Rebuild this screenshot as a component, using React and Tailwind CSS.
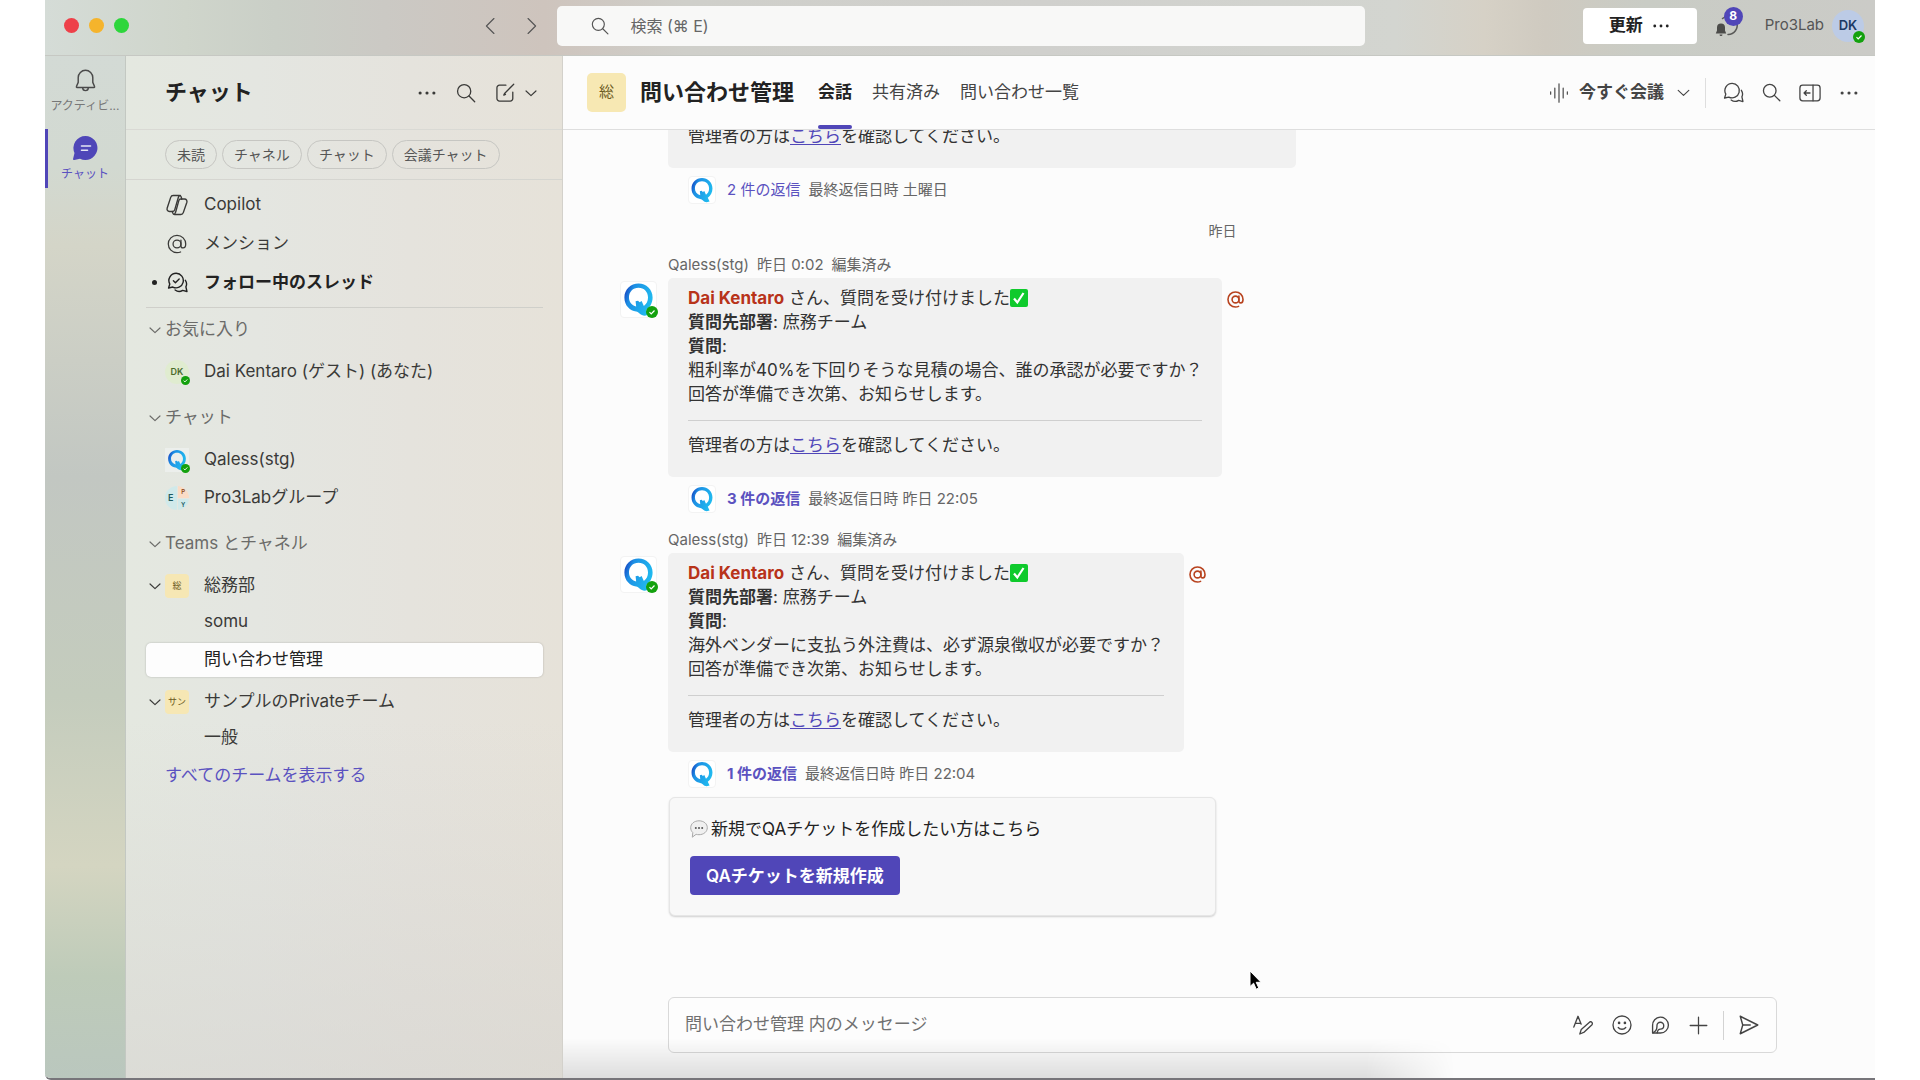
import React from 'react'
import clsx from 'clsx'

const Svg = ({ size = 24, width = 1.4, className, children }) => (
  <svg
    width={size}
    height={size}
    viewBox="0 0 24 24"
    fill="none"
    stroke="currentColor"
    strokeWidth={width}
    strokeLinecap="round"
    strokeLinejoin="round"
    className={clsx('shrink-0', className)}
    aria-hidden="true"
  >
    {children}
  </svg>
)

const SearchIcon = (props) => (
  <Svg {...props}>
    <circle cx="10" cy="10" r="7.2" />
    <path d="M15.300 15.300l6.200 6.200" />
  </Svg>
)

const DotsIcon = (props) => (
  <Svg {...props}>
    <g fill="currentColor" stroke="none">
      <circle cx="4.500" cy="12" r="1.700" />
      <circle cx="12" cy="12" r="1.700" />
      <circle cx="19.500" cy="12" r="1.700" />
    </g>
  </Svg>
)

const ChevronDown = (props) => (
  <Svg {...props}>
    <path d="M3.500 8.500l8.500 8 8.500-8" />
  </Svg>
)

const ComposeIcon = (props) => (
  <Svg {...props}>
    <path d="M13 3.500H6A2.800 2.800 0 0 0 3.200 6.300V18A2.800 2.800 0 0 0 6 20.800H17.700A2.800 2.800 0 0 0 20.500 18V11" />
    <path d="M21.500 2.500L11.500 12.500l-.8 1.800 1.800-.8" />
  </Svg>
)

const BellIcon = (props) => (
  <Svg {...props}>
    <path d="M12 2.200a7 7 0 0 0-7 7v4.600l-1.700 4a.6.6 0 0 0 .6.900h16.200a.6.6 0 0 0 .6-.9l-1.700-4V9.200a7 7 0 0 0-7-7z" />
    <path d="M9.300 19a2.700 2.700 0 0 0 5.400 0" />
  </Svg>
)

const ChatFilledIcon = () => (
  <svg width="26" height="26" viewBox="0 0 26 26" aria-hidden="true">
    <path d="M13.500 1A12 12 0 1 1 8 23.700L2.300 25a1 1 0 0 1-1.200-1.200L2.500 18A12 12 0 0 1 13.500 1z" fill="#4f46b8" />
    <path d="M9.500 11h9M9.500 15.200h6" stroke="#e6e6f4" strokeWidth="1.600" strokeLinecap="round" />
  </svg>
)

const CopilotIcon = (props) => (
  <Svg {...props}>
    <path d="M8.200 2.500h6.200c.9 0 1.500.5 1.800 1.400l.6 2.300M8.200 2.500c-1.200 0-2.100.7-2.500 1.900L2.200 15c-.6 1.900.4 3.500 2.300 3.500h3.200c1 0 1.700-.6 2-1.600l3.700-12.600c.3-1.100.9-1.800 2-1.800" />
    <path d="M15.800 21.500H9.600c-.9 0-1.500-.5-1.800-1.400l-.5-1.600M15.800 21.500c1.200 0 2.100-.7 2.500-1.900L21.800 9.500c.6-1.900-.4-3.500-2.300-3.500h-3.700c-1 0-1.700.6-2 1.600l-3.200 11.600c-.3 1.200-.9 2-1.900 2.200" />
  </Svg>
)

const AtIcon = (props) => (
  <Svg {...props}>
    <circle cx="12" cy="12" r="4.300" />
    <path d="M16.300 7.700v6.100c0 1.600.9 2.500 2.300 2.500 1.700 0 2.900-1.600 2.900-4.300A9.500 9.500 0 1 0 12 21.500c1.400 0 2.700-.2 3.900-.8" />
  </Svg>
)

const ThreadsIcon = ({ check, ...props }) => (
  <Svg {...props}>
    <path d="M10.500 1.500a8.300 8.300 0 1 1-3.900 15.700l-4.800 1.100 1.400-4.500A8.300 8.300 0 0 1 10.500 1.500z" />
    <path d="M21 9.500a7.600 7.600 0 0 1 .6 7.500l1.200 5.300-4.900-1.300a7.800 7.800 0 0 1-8.600-.4" />
    {check && <path d="M7.300 10l2.300 2.300 4.300-4.300" />}
  </Svg>
)

const WaveIcon = (props) => (
  <Svg {...props}>
    <path d="M2 10.500v3M7 6v12M12 1v22M17 6v12M22 10.500v3" />
  </Svg>
)

const PanelIcon = (props) => (
  <Svg {...props}>
    <rect x="1" y="3.500" width="22" height="17" rx="3" />
    <path d="M15.300 3.500v17M12 12H5.500M8 9.500L5.500 12 8 14.500" />
  </Svg>
)

const FormatIcon = (props) => (
  <Svg {...props}>
    <path d="M1 14.500L6 1.500l3.800 9.500M2.800 10h6" />
    <path d="M20.500 8a2.300 2.300 0 0 1 2.300 3.600L13.500 20.500l-5.300 2.300 1.700-5.500z" />
  </Svg>
)

const SmileIcon = (props) => (
  <Svg {...props}>
    <circle cx="12" cy="12" r="10.800" />
    <path d="M7.500 15c2.300 2.800 6.700 2.800 9 0" />
    <circle cx="8.500" cy="9.500" r=".8" fill="currentColor" />
    <circle cx="15.500" cy="9.500" r=".8" fill="currentColor" />
  </Svg>
)

const LoopIcon = (props) => (
  <Svg {...props}>
    <path d="M2 21.500V12A10 10 0 1 1 12 21.500z" />
    <path d="M2.300 21.200c3.200-1.500 5.200-4.200 5.200-7.700v-1.300a4.300 4.300 0 1 1 4.300 4.300c-1.800 0-3.500 1.600-4 4.800" />
  </Svg>
)

const PlusIcon = (props) => (
  <Svg {...props}>
    <path d="M12 1.500v21M1.500 12h21" />
  </Svg>
)

const SendIcon = (props) => (
  <Svg {...props}>
    <path d="M1.500 1.500L22.500 12 1.500 22.500 4.500 12z" />
    <path d="M4.500 12h9" />
  </Svg>
)

const NotifyIcon = () => (
  <svg width="26" height="26" viewBox="0 0 26 26" className="shrink-0" aria-hidden="true">
    <path d="M8.500 5.500A9 9 0 1 1 14 21.500" fill="none" stroke="#5a5a58" strokeWidth="1.500" strokeLinecap="round" />
    <path d="M7 10.500a4 4 0 0 0-4 4v3L1.800 20.500h10.400L11 17.500v-3a4 4 0 0 0-4-4zM5.500 21.500h3a1.500 1.500 0 0 1-3 0z" fill="#4c4c4a" />
  </svg>
)

const QLogo = ({ size }) => (
  <svg width={size} height={size} viewBox="0 0 36 36" aria-hidden="true">
    <defs>
      <linearGradient id="q-ring" x1="0" y1="0.200" x2="1" y2="0.600">
        <stop offset="0" stopColor="#1540c0" />
        <stop offset="0.250" stopColor="#1d8fe4" />
        <stop offset="1" stopColor="#20bdf0" />
      </linearGradient>
    </defs>
    <path
      fillRule="evenodd"
      d="M18 1.500C10 1.500 3.500 7.500 3.500 16S9.500 29.800 15.500 30.300c3 .3 4.500 4.200 9 4.500l4-1-2.500-5c4-2.800 6.500-7.300 6.500-12.800C32.500 7.500 26 1.500 18 1.500zM18 6c5.800 0 9.800 4.300 9.800 10 0 3.800-1.600 6.800-4.300 8.600l-2.300-5.100-2 1.300-1.700-1.600-2.500.6.600 5.400C11 24 8.200 20.500 8.200 16c0-5.700 4-10 9.800-10z"
      fill="url(#q-ring)"
    />
  </svg>
)

const Presence = ({ className }) => (
  <svg width="12" height="12" viewBox="0 0 12 12" className={clsx('absolute', className)} aria-hidden="true">
    <circle cx="6" cy="6" r="6" fill="#13a10e" />
    <path d="M3.500 6.200l1.700 1.700 3.300-3.400" fill="none" stroke="#fff" strokeWidth="1.200" />
  </svg>
)

const CheckEmoji = () => (
  <svg width="18" height="18" viewBox="0 0 18 18" className="inline-block align-[-3px]" role="img" aria-label="完了">
    <rect width="18" height="18" rx="2" fill="#0fca2c" />
    <path d="M4 9.500l3.300 4L13.500 4" fill="none" stroke="#fff" strokeWidth="2.200" />
  </svg>
)

const SpeechEmoji = () => (
  <svg width="18" height="18" viewBox="0 0 18 18" className="shrink-0" aria-hidden="true">
    <path d="M9 .8c4.700 0 8.300 2.900 8.300 6.900s-3.600 7-8.300 7c-1 0-2-.1-2.900-.4L2.300 17.200l.5-4.600C1.500 11.400.7 9.700.7 7.700.7 3.700 4.300.8 9 .8z" fill="#f0f0f0" stroke="#a9a9a9" strokeWidth="1" />
    <g fill="#555">
      <circle cx="5.800" cy="8" r="1" />
      <circle cx="9" cy="8" r="1" />
      <circle cx="12.200" cy="8" r="1" />
    </g>
  </svg>
)

const TitleBar = () => (
  <header className="flex h-14 shrink-0 items-center border-b border-[#c6c8c3] bg-[linear-gradient(to_right,#d5dcd7,#cfd5cb_140px,#cacfc7_230px,#cbc9c4_340px,#cec4bd_500px,#cfcfca_640px,#d0d0cd_1000px,#d3d5d0_1350px,#d6d1c6_1440px,#cfcac0_1500px,#c9ccc5_1600px,#cbcbc7)] pb-1">
    <div className="flex w-[28%] items-center pl-[19px]">
      <div className="flex gap-2.5">
        <span className="size-[15px] rounded-full bg-[#ee4049]" />
        <span className="size-[15px] rounded-full bg-[#f5b42c]" />
        <span className="size-[15px] rounded-full bg-[#2dd63c]" />
      </div>
      <div className="ml-auto flex gap-5 pr-4 text-[#555]">
        <button aria-label="戻る">
          <Svg size={20}><path d="M15.500 3l-9 9 9 9" /></Svg>
        </button>
        <button aria-label="進む">
          <Svg size={20}><path d="M8.500 3l9 9-9 9" /></Svg>
        </button>
      </div>
    </div>
    <label className="flex h-10 w-[44.150%] items-center rounded-[5px] bg-[#f8f8f7] pl-[33px] text-[#555]">
      <SearchIcon size={20} />
      <input
        type="search"
        aria-label="検索"
        placeholder="検索 (⌘ E)"
        className="ml-5 flex-1 bg-transparent text-[16px] outline-none placeholder:text-[#666]"
      />
    </label>
    <div className="flex flex-1 items-center justify-end pr-[11px]">
      <button className="flex h-9 w-[114px] items-center justify-center gap-2 rounded bg-white text-[17px] font-semibold text-[#222]">
        更新
        <DotsIcon size={20} />
      </button>
      <button className="relative ml-[17px]" aria-label="通知 8 件">
        <NotifyIcon />
        <span className="absolute -top-1.5 left-2.5 flex size-[19px] items-center justify-center rounded-full bg-[#5046b8] text-[12px] font-bold text-white">
          8
        </span>
      </button>
      <span className="ml-[25px] text-[15px] text-[#555]">Pro3Lab</span>
      <span className="relative ml-2 flex size-8 items-center justify-center rounded-full bg-[#bccbe6] text-[13px] font-semibold text-[#1d3a63]">
        DK
        <Presence className="right-[-1px] bottom-[-1px]" />
      </span>
    </div>
  </header>
)

const Rail = () => (
  <nav className="flex w-[81px] shrink-0 flex-col border-r border-[#c3c8c2] bg-linear-[to_bottom,#d3dad5,#d2d9d1_110px,#d4d5c8_190px,#c2c7c2_420px,#c4ccbd_640px,#d4d5c1_810px,#becbb9_920px,#bac7be] text-[12px]">
    <button className="flex h-[73px] flex-col items-center gap-1 pt-3 text-[#777]">
      <BellIcon size={25} className="text-[#4a4a4a]" />
      アクティビ...
    </button>
    <button className="flex h-[59px] flex-col items-center gap-1 border-l-[3px] border-[#5046b8] pt-1.5 pr-[3px] text-[#5b52c0]">
      <ChatFilledIcon />
      チャット
    </button>
  </nav>
)

const filters = ['未読', 'チャネル', 'チャット', '会議チャット']

const Row = ({ icon, chevron, children, className }) => (
  <button className={clsx('flex w-full items-center rounded-[5px] text-left', className)}>
    <span className="flex w-[19px] shrink-0 items-center pl-0.5">{chevron}</span>
    <span className="mr-[15px] flex w-6 shrink-0 justify-center">{icon}</span>
    {children}
  </button>
)

const Section = ({ children }) => (
  <button className="mb-1.5 flex h-[34px] w-full items-center text-left text-[#6b6b69]">
    <span className="w-[19px] pl-0.5"><ChevronDown size={14} width={2} /></span>
    {children}
  </button>
)

const TeamBadge = ({ children }) => (
  <span className="flex size-6 items-center justify-center rounded bg-[#f6e7b4] text-[9px] text-[#6b5a22]">{children}</span>
)

const Sidebar = () => (
  <aside className="flex w-[437px] shrink-0 flex-col border-r border-[#d3d1cb] bg-[linear-gradient(to_top,rgb(214_212_208/0.6),transparent_35%),linear-gradient(to_right,#e4e8e0,#e4e6e1_30%,#e5e3dd_65%,#e6e2d9)] text-[17px] text-[#3a3a38]">
    <div className="flex h-[74px] items-center border-b border-[#d9d9d4] pr-6 pl-[39px]">
      <h1 className="mr-auto text-[22px] font-bold text-[#222]">チャット</h1>
      <button className="mr-[17px]" aria-label="その他"><DotsIcon size={22} /></button>
      <button className="mr-[17px]" aria-label="検索"><SearchIcon size={22} /></button>
      <button aria-label="新しいチャット"><ComposeIcon size={22} /></button>
      <button className="ml-2" aria-label="チャットの種類"><ChevronDown size={14} width={2} /></button>
    </div>
    <div className="flex h-[50px] items-center gap-[5px] border-b border-[#d5d5d0] pl-[39px]">
      {filters.map((filter) => (
        <button key={filter} className="h-[29px] rounded-full border border-[#c6c6c2] px-[11px] text-[14px] text-[#555]">
          {filter}
        </button>
      ))}
    </div>

    <div className="flex-1 pt-[5px] pr-[19px] pl-5">
      <Row className="h-[39px]" icon={<CopilotIcon size={24} />}>Copilot</Row>
      <Row className="h-[39px]" icon={<AtIcon size={22} />}>メンション</Row>
      <Row
        className="h-[39px] font-bold text-[#222]"
        icon={<ThreadsIcon size={21} width={1.600} check />}
        chevron={<span className="ml-1 size-[5px] rounded-full bg-[#222]" />}
      >
        フォロー中のスレッド
      </Row>

      <div className="mt-[5px] border-t border-[#cfcfca] pt-[5px]">
        <Section>お気に入り</Section>
        <Row
          className="h-[38px]"
          icon={
            <span className="relative flex size-6 items-center justify-center rounded-full bg-[#e0ecd0] text-[9px] font-semibold text-[#4b6b2c]">
              DK
              <Presence className="right-[-1px] bottom-[-1px] size-[9px]" />
            </span>
          }
        >
          Dai Kentaro (ゲスト) (あなた)
        </Row>
      </div>

      <div className="mt-2.5">
        <Section>チャット</Section>
        <Row
          className="h-[38px]"
          icon={
            <span className="relative flex size-6 items-center justify-center bg-[#ecefec]">
              <QLogo size={22} />
              <Presence className="right-[-1px] bottom-[-1px] size-[9px]" />
            </span>
          }
        >
          Qaless(stg)
        </Row>
        <Row
          className="h-[38px]"
          icon={
            <span className="grid size-6 grid-cols-2 grid-rows-2 gap-px overflow-hidden rounded-full text-center text-[6px] leading-[11px] font-semibold">
              <span className="row-span-2 bg-[#d0e9ea] text-[9px] leading-6 text-[#1d5a5f]">E</span>
              <span className="bg-[#fadcc6] text-[#8a4a1c]">P</span>
              <span className="bg-[#d0e9ea] text-[#1d5a5f]">Y</span>
            </span>
          }
        >
          Pro3Labグループ
        </Row>
      </div>

      <div className="mt-2.5">
        <Section>Teams とチャネル</Section>
        <Row className="h-[38px]" chevron={<ChevronDown size={14} width={2} />} icon={<TeamBadge>総</TeamBadge>}>
          総務部
        </Row>
        <Row className="mb-1 h-[34px]">somu</Row>
        <Row className="mb-1.5 h-[34px] bg-[#fdfdfd] text-[#222] shadow-[0_0_2px_rgba(0,0,0,0.25)]">問い合わせ管理</Row>
        <Row className="h-[38px]" chevron={<ChevronDown size={14} width={2} />} icon={<TeamBadge>サン</TeamBadge>}>
          サンプルのPrivateチーム
        </Row>
        <Row className="mb-1 h-[34px]">一般</Row>
        <a href="#teams" className="ml-[19px] flex h-[34px] items-center text-[#5b52c0]">すべてのチームを表示する</a>
      </div>
    </div>
  </aside>
)

const ChannelHeader = () => (
  <div className="flex h-[74px] shrink-0 items-center border-b border-[#dedede] pr-[15px] pl-6 text-[17px] text-[#444]">
    <span className="flex size-[39px] items-center justify-center rounded-[5px] bg-[#f7e8b3] text-[15px] text-[#6b5a22]">総</span>
    <h2 className="ml-3.5 text-[22px] font-bold whitespace-nowrap text-[#222]">問い合わせ管理</h2>
    <div role="tablist" className="ml-6 flex h-full gap-5 whitespace-nowrap">
      <button role="tab" aria-selected="true" className="relative font-bold text-[#222]">
        会話
        <span className="absolute inset-x-0 bottom-0 h-1 rounded-full bg-[#5046b8]" />
      </button>
      <button role="tab">共有済み</button>
      <button role="tab">問い合わせ一覧</button>
    </div>
    <button className="ml-auto flex items-center gap-2.5 font-bold whitespace-nowrap">
      <WaveIcon size={20} />
      今すぐ会議
    </button>
    <button className="ml-3" aria-label="会議オプション"><ChevronDown size={15} width={1.800} /></button>
    <span className="mr-[17px] ml-3.5 h-[30px] w-px bg-[#dedede]" />
    <div className="flex gap-[17px]">
      <button aria-label="スレッド"><ThreadsIcon size={21} width={1.500} /></button>
      <button aria-label="検索"><SearchIcon size={21} width={1.500} /></button>
      <button aria-label="パネルを開く"><PanelIcon size={22} /></button>
      <button aria-label="その他"><DotsIcon size={22} /></button>
    </div>
  </div>
)

const AdminNote = () => (
  <p>
    管理者の方は<a href="#admin" className="text-[#5046b8] underline underline-offset-2">こちら</a>を確認してください。
  </p>
)

const Replies = ({ count, last, unread }) => (
  <div className="mt-2 ml-5 flex h-7 items-center text-[15px] text-[#666]">
    <span className="flex size-7 items-center justify-center rounded border border-[#f3f3f3] bg-white">
      <QLogo size={26} />
    </span>
    <a href="#replies" className={clsx('mr-2 ml-[11px] text-[#5b52c0]', unread && 'font-bold text-[#4a41ad]')}>
      {count} 件の返信
    </a>
    最終返信日時 {last}
  </div>
)

const messages = [
  {
    time: '昨日 0:02',
    question: '粗利率が40%を下回りそうな見積の場合、誰の承認が必要ですか？',
    replies: 3,
    last: '昨日 22:05',
  },
  {
    time: '昨日 12:39',
    question: '海外ベンダーに支払う外注費は、必ず源泉徴収が必要ですか？',
    replies: 1,
    last: '昨日 22:04',
  },
]

const Message = ({ message, className }) => (
  <article className={className}>
    <div className="mb-[3px] flex h-5 items-center gap-2 text-[15px] text-[#666]">
      <span>Qaless(stg)</span>
      <span>{message.time}</span>
      <span>編集済み</span>
    </div>
    <div className="relative flex items-start">
      <span className="absolute top-[3px] -left-12 flex size-[37px] items-center justify-center rounded border border-[#f3f3f3] bg-white">
        <QLogo size={35} />
        <Presence className="right-[-2px] bottom-[-1px]" />
      </span>
      <div className="w-fit rounded-[5px] bg-[#f1f1f1] px-5 pt-2 pb-5">
        <p><b className="text-[#b8331a]">Dai Kentaro</b> さん、質問を受け付けました<CheckEmoji /></p>
        <p><b>質問先部署</b>: 庶務チーム</p>
        <p><b>質問</b>:</p>
        <p>{message.question}</p>
        <p>回答が準備でき次第、お知らせします。</p>
        <hr className="mt-3.5 mb-3 border-[#cfcfcf]" />
        <AdminNote />
      </div>
      <AtIcon size={19} width={2} className="mt-3 ml-1 text-[#b8431f]" />
    </div>
    <Replies count={message.replies} last={message.last} unread />
  </article>
)

const Composer = () => (
  <div className="mr-[98px] mb-[25px] ml-[105px] flex h-14 shrink-0 items-center rounded-md border border-[#d9d9d9] bg-[#fdfdfd] pr-[17px] pl-4 text-[#444]">
    <input
      type="text"
      aria-label="メッセージ"
      placeholder="問い合わせ管理 内のメッセージ"
      className="flex-1 bg-transparent text-[17px] outline-none placeholder:text-[#707070]"
    />
    <div className="flex items-center gap-[19px]">
      <button aria-label="書式"><FormatIcon size={20} width={1.600} /></button>
      <button aria-label="絵文字"><SmileIcon size={20} width={1.600} /></button>
      <button aria-label="Loop"><LoopIcon size={19} width={1.700} /></button>
      <button aria-label="追加"><PlusIcon size={19} width={1.600} /></button>
    </div>
    <span className="mx-[15px] h-[29px] w-px bg-[#d3d3d3]" />
    <button aria-label="送信"><SendIcon size={20} width={1.700} /></button>
  </div>
)

const Conversation = () => (
  <main className="relative flex min-w-0 flex-1 flex-col bg-[#fcfcfc]">
    <ChannelHeader />
    <div className="flex min-h-0 flex-1 flex-col justify-end overflow-hidden pb-[81px] pl-[105px] text-[17px] leading-6 text-[#333]">
      <div className="w-[628px] rounded-[5px] bg-[#f1f1f1] px-5 pt-10 pb-5">
        <AdminNote />
      </div>
      <Replies count={2} last="土曜日" />
      <p className="mt-[17px] mr-[98px] text-center text-[14px] leading-5 text-[#666]">昨日</p>
      <Message message={messages[0]} className="mt-3.5" />
      <Message message={messages[1]} className="mt-[17px]" />
      <div className="mt-[9px] ml-px w-[547px] rounded-md border border-[#e6e6e6] bg-[#f8f8f8] px-5 pt-[19px] pb-5 shadow-[0_1px_2px_rgba(0,0,0,0.18)]">
        <p className="flex items-center gap-[3px] text-[#222]">
          <SpeechEmoji />
          新規でQAチケットを作成したい方はこちら
        </p>
        <button className="mt-[15px] block h-[39px] rounded bg-[#5046b8] px-4 font-semibold text-white">
          QAチケットを新規作成
        </button>
      </div>
    </div>
    <Composer />
    <div className="pointer-events-none absolute bottom-0 left-0 h-10 w-[68%] bg-linear-to-t from-black/12 to-transparent mask-r-from-90%" />
    {/* mouse pointer */}
    <svg width="13" height="20" viewBox="0 0 13 20" className="absolute bottom-[88px] left-[686px]" aria-hidden="true">
      <path d="M1 1v15.500l3.600-3.300 2.600 6 2.600-1.200-2.600-5.700H12z" fill="#000" stroke="#fff" strokeWidth="1" />
    </svg>
  </main>
)

const App = () => (
  <div className="h-screen bg-white px-[45px] font-['Inter','Noto_Sans_CJK_JP',sans-serif]">
    <div className="flex h-full flex-col overflow-hidden rounded-bl-md border-b-2 border-[#77757a]">
      <TitleBar />
      <div className="flex min-h-0 flex-1">
        <Rail />
        <Sidebar />
        <Conversation />
      </div>
    </div>
  </div>
)

export default App
